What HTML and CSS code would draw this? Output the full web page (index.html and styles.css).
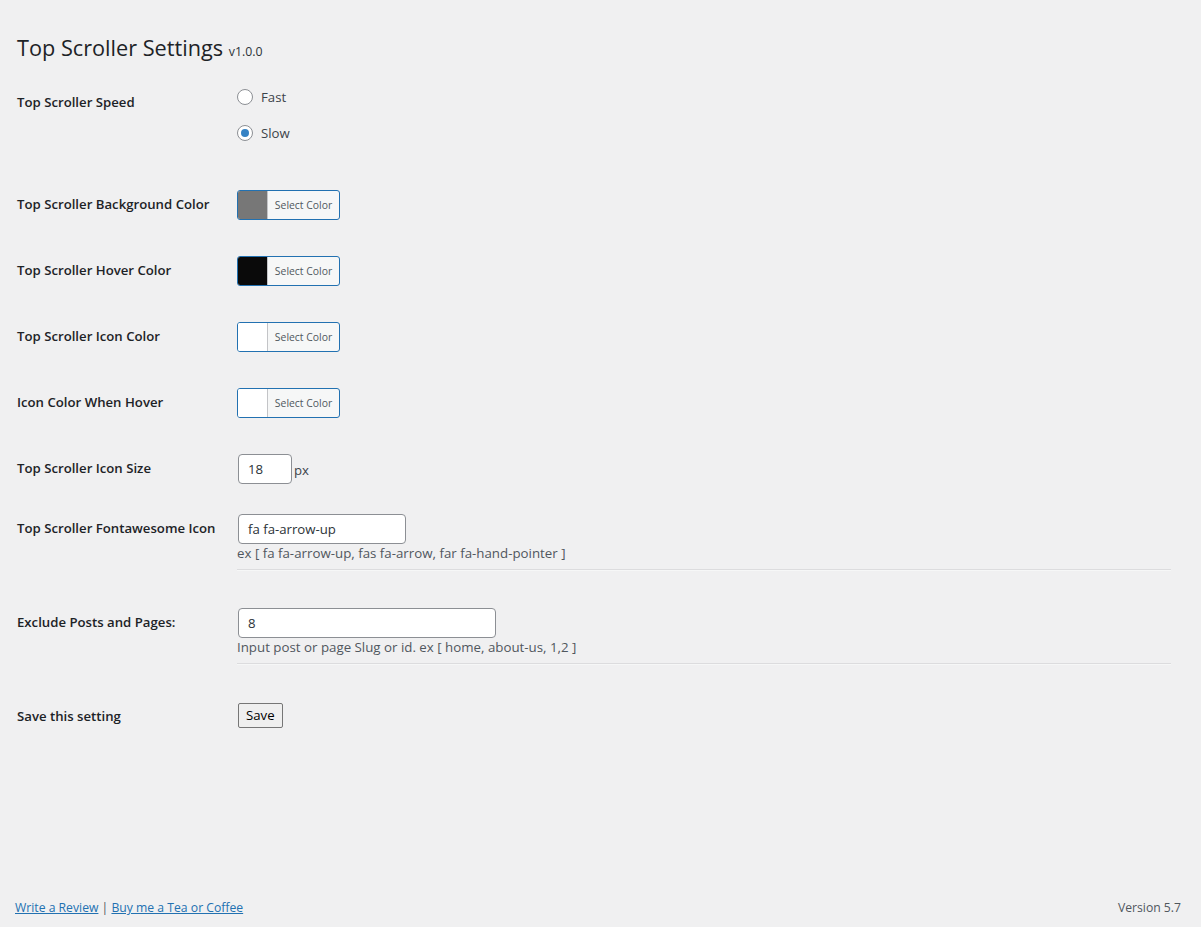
FILE: index.html
```html
<!DOCTYPE html>
<html lang="en">
<head>
<meta charset="utf-8">
<title>Top Scroller Settings</title>
<link rel="stylesheet" href="styles.css">
</head>
<body>
<div class="page">
  <div class="wrap">
    <h1 class="title">Top Scroller Settings <small class="ver">v1.0.0</small></h1>
    <form class="form">
      <div class="row row-speed">
        <div class="th">Top Scroller Speed</div>
        <div class="td">
          <label class="radio"><span class="rbtn"></span>Fast</label>
          <label class="radio"><span class="rbtn checked"></span>Slow</label>
        </div>
      </div>
      <div class="row">
        <div class="th">Top Scroller Background Color</div>
        <div class="td"><span class="picker"><span class="swatch" style="background:#777777"></span><span class="pick-text">Select Color</span></span></div>
      </div>
      <div class="row">
        <div class="th">Top Scroller Hover Color</div>
        <div class="td"><span class="picker"><span class="swatch" style="background:#0a0a0a"></span><span class="pick-text">Select Color</span></span></div>
      </div>
      <div class="row">
        <div class="th">Top Scroller Icon Color</div>
        <div class="td"><span class="picker"><span class="swatch" style="background:#ffffff"></span><span class="pick-text">Select Color</span></span></div>
      </div>
      <div class="row">
        <div class="th">Icon Color When Hover</div>
        <div class="td"><span class="picker"><span class="swatch" style="background:#ffffff"></span><span class="pick-text">Select Color</span></span></div>
      </div>
      <div class="row row-input">
        <div class="th">Top Scroller Icon Size</div>
        <div class="td"><span class="input input-small">18</span><span class="unit">px</span></div>
      </div>
      <div class="row row-input">
        <div class="th">Top Scroller Fontawesome Icon</div>
        <div class="td td-block">
          <span class="input input-mid">fa fa-arrow-up</span>
          <p class="desc">ex [ fa fa-arrow-up, fas fa-arrow, far fa-hand-pointer ]</p>
          <hr class="sep">
        </div>
      </div>
      <div class="row row-input">
        <div class="th">Exclude Posts and Pages:</div>
        <div class="td td-block">
          <span class="input input-wide">8</span>
          <p class="desc">Input post or page Slug or id. ex [ home, about-us, 1,2 ]</p>
          <hr class="sep">
        </div>
      </div>
      <div class="row row-save">
        <div class="th">Save this setting</div>
        <div class="td"><span class="save">Save</span></div>
      </div>
    </form>
  </div>
  <div class="footer">
    <p class="foot-left"><a href="#">Write a Review</a> | <a href="#">Buy me a Tea or Coffee</a></p>
    <p class="foot-right">Version 5.7</p>
  </div>
</div>
</body>
</html>
```
FILE: styles.css
```css
* { box-sizing: border-box; }
html, body { margin: 0; padding: 0; }
body {
  background: #f0f0f1;
  color: #1d2327;
  font-family: "Open Sans", "Noto Sans", sans-serif;
  font-size: 12.3px;
  line-height: 1.4;
  width: 1201px;
  height: 927px;
  overflow: hidden;
}
.page {
  height: 927px;
  display: flex;
  flex-direction: column;
  padding: 0 20px 0 17px;
}
.wrap { flex: 1; }
.title {
  font-size: 21.7px;
  font-weight: 400;
  line-height: 30px;
  margin: 33px 0 0 0;
  color: #1d2327;
}
.ver { font-size: 12.3px; color: #2c3338; }
.form { margin-top: 6px; }
.row {
  display: flex;
  align-items: flex-start;
}
.th {
  width: 220px;
  flex: none;
  padding: 20px 0 20px 0;
  font-size: 13.2px;
  font-weight: 600;
  line-height: 18px;
}
.td {
  flex: 1;
  padding: 15px 0 15px 0;
  display: flex;
  align-items: center;
  font-size: 13.2px;
}
.row-speed .td {
  flex-direction: column;
  align-items: flex-start;
}
.radio {
  display: flex;
  align-items: center;
  height: 36px;
  margin-top: -9px;
  margin-bottom: 9px;
  color: #3c434a;
}
.rbtn {
  width: 16px;
  height: 16px;
  border: 1px solid #8c8f94;
  border-radius: 50%;
  background: #fff;
  margin-right: 8px;
  display: inline-flex;
  align-items: center;
  justify-content: center;
}
.rbtn.checked::after {
  content: "";
  width: 8px;
  height: 8px;
  border-radius: 50%;
  background: #3582c4;
}
.picker {
  display: inline-flex;
  height: 30px;
  width: 103px;
  border: 1px solid #2271b1;
  border-radius: 3px;
  overflow: hidden;
  margin-bottom: 6px;
  background: #f6f7f7;
}
.swatch {
  width: 30px;
  flex: none;
  border-right: 1px solid #c3c4c7;
}
.pick-text {
  flex: 1;
  display: flex;
  align-items: center;
  justify-content: center;
  font-size: 10.4px;
  color: #50575e;
}
.input {
  display: inline-flex;
  align-items: center;
  height: 30px;
  background: #fff;
  border: 1px solid #8c8f94;
  border-radius: 4px;
  padding: 0 9px;
  color: #2c3338;
  font-size: 13.2px;
  margin-left: 1px;
}
.input-small { width: 54px; }
.input-mid { width: 168px; }
.input-wide { width: 258px; }
.unit { color: #3c434a; margin-left: 2px; margin-top: 2px; }
.td-block { flex-direction: column; align-items: stretch; }
.td-block .input { align-self: flex-start; }
.desc {
  margin: 0;
  font-size: 13.3px;
  line-height: 18px;
  color: #50575e;
}
.sep {
  border: 0;
  border-top: 1px solid #dcdcde;
  border-bottom: 1px solid #f6f7f7;
  margin: 7px 0 7px 0;
  height: 0;
  width: 934px;
}
.row-save .td { padding-top: 16px; }
.save {
  display: inline-flex;
  align-items: center;
  height: 25px;
  padding: 0 7px;
  border: 1px solid #767676;
  border-radius: 2px;
  background: #efefef;
  color: #000;
  font-size: 13.2px;
  margin-left: 1px;
}
.footer {
  display: flex;
  justify-content: space-between;
  align-items: center;
  height: 38px;
  color: #50575e;
  font-size: 12.2px;
  margin-left: -2px;
}
.footer p { margin: 0; }
.footer a { color: #2271b1; text-decoration: underline; }
```
